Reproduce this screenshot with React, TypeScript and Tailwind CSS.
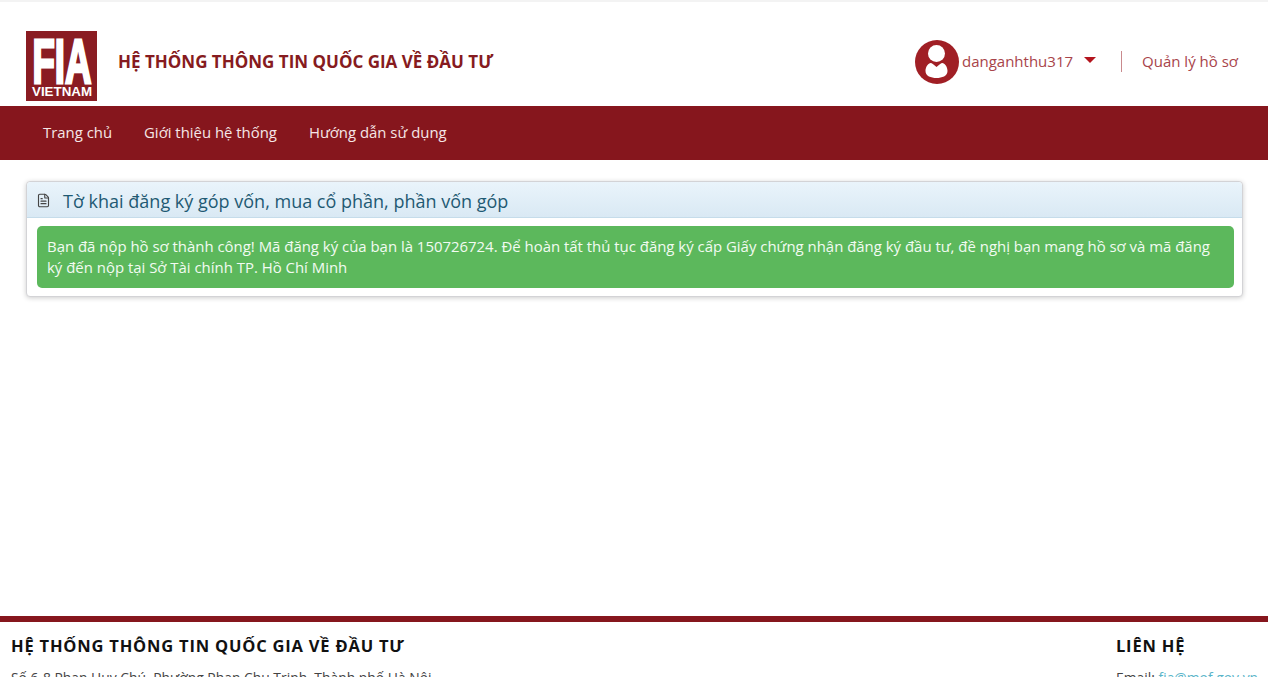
import { FileText } from "lucide-react";

const navItems = ["Trang chủ", "Giới thiệu hệ thống", "Hướng dẫn sử dụng"];

function Logo() {
  return (
    <svg viewBox="0 0 71 70" className="h-[70px] w-[71px] shrink-0">
      <rect width="71" height="70" fill="#8a1c22" />
      <g transform="translate(0 52) scale(1 1.85)">
        <text x="36" y="0" textAnchor="middle" fontFamily="Liberation Sans" fontWeight="700" fontSize="34" fill="#fff" textLength="59" lengthAdjust="spacingAndGlyphs" stroke="#fff" strokeWidth="1.6">
          FIA
        </text>
      </g>
      <text x="36" y="64.500" textAnchor="middle" fontFamily="Liberation Sans" fontWeight="700" fontSize="12.500" fill="#fff" textLength="60" lengthAdjust="spacingAndGlyphs">
        VIETNAM
      </text>
    </svg>
  );
}

function UserIcon() {
  return (
    <svg viewBox="0 0 44 44" className="h-[44px] w-[44px] shrink-0">
      <circle cx="22" cy="22" r="22" fill="#a01f25" />
      <circle cx="21.500" cy="13.500" r="8.500" fill="#fff" />
      <path d="M21.500 27C19 25 17 23 15.500 23C12 24 10.500 28 10.500 31C10.500 36 16 38 21.500 38C27 38 32.500 36 32.500 31C32.500 28 31 24 27.500 23C26 23 24 25 21.500 27Z" fill="#fff" />
    </svg>
  );
}

export default function App() {
  return (
    <div className="flex h-[688px] flex-col overflow-hidden bg-white font-['Open_Sans',sans-serif] text-[#333]">
      <div className="h-[2px] bg-[#f3f3f3]" />

      <header className="flex h-[104px] items-center justify-between pl-[26px] pr-[30px] pt-[15px]">
        <div className="flex items-center gap-[21px] pt-[9px]">
          <Logo />
          <h1 className="mb-[9px] text-[17px] font-bold text-[#861b20]">HỆ THỐNG THÔNG TIN QUỐC GIA VỀ ĐẦU TƯ</h1>
        </div>
        <div className="flex items-center text-[15px] text-[#a8444a]">
          <UserIcon />
          <span className="ml-[3px]">danganhthu317</span>
          <span className="ml-[11px] mb-[3px] h-0 w-0 border-x-[6.500px] border-t-[6px] border-x-transparent border-t-[#b3141d]" />
          <span className="ml-[25px] h-[21px] w-px bg-[#c98a8d]" />
          <span className="ml-[20px]">Quản lý hồ sơ</span>
        </div>
      </header>

      <nav className="flex h-[54px] items-center gap-[32px] bg-[#86161d] pb-[2px] pl-[43px] text-[14.900px] text-[#f5e6e6]">
        {navItems.map((item) => (
          <span key={item}>{item}</span>
        ))}
      </nav>

      <main className="flex-1 px-[26px] pt-[21px]">
        <section className="w-[1217px] rounded-[4px] border border-[#d3d3d6] bg-white shadow-[0_1px_5px_rgba(0,0,0,0.2)]">
          <div className="flex h-[36px] items-center gap-[12px] rounded-t-[4px] border-b border-[#c5dcea] bg-gradient-to-b from-[#eaf4fb] to-[#d9e9f4] pl-[9px]">
            <FileText size={15} strokeWidth={1.8} className="mt-[2px] text-[#444]" />
            <h2 className="pt-[2px] text-[18px] font-normal leading-none text-[#1f5a73]">Tờ khai đăng ký góp vốn, mua cổ phần, phần vốn góp</h2>
          </div>
          <div className="pb-[8px] pl-[10px] pr-[8px] pt-[8px]">
            <div className="rounded-[5px] bg-[#5cb85c] pb-[11px] pl-[10px] pr-[20px] pt-[10px] text-[14.930px] leading-[20.500px] text-[#f2fbf2]">
              Bạn đã nộp hồ sơ thành công! Mã đăng ký của bạn là 150726724. Để hoàn tất thủ tục đăng ký cấp Giấy chứng nhận đăng ký đầu tư, đề nghị bạn mang hồ sơ và mã đăng ký đến nộp tại Sở Tài chính TP. Hồ Chí Minh
            </div>
          </div>
        </section>
      </main>

      <footer className="h-[72px] border-t-[6px] border-[#86161d] bg-white">
        <div className="flex h-[55px] justify-between overflow-hidden pl-[11px] pr-[11px] pt-[13px]">
          <div>
            <h3 className="text-[16.500px] font-bold leading-[22px] tracking-[0.8px] text-[#111]">HỆ THỐNG THÔNG TIN QUỐC GIA VỀ ĐẦU TƯ</h3>
            <p className="mt-[11px] text-[13.870px] leading-[20px] text-[#444]">Số 6-8 Phan Huy Chú, Phường Phan Chu Trinh, Thành phố Hà Nội</p>
          </div>
          <div className="w-[141px]">
            <h3 className="text-[16.500px] font-bold leading-[22px] tracking-[0.8px] text-[#111]">LIÊN HỆ</h3>
            <p className="mt-[11px] whitespace-nowrap text-[13.870px] leading-[20px] text-[#444]">
              Email: <span className="text-[#5bb5c9]">fia@mof.gov.vn</span>
            </p>
          </div>
        </div>
      </footer>
    </div>
  );
}
